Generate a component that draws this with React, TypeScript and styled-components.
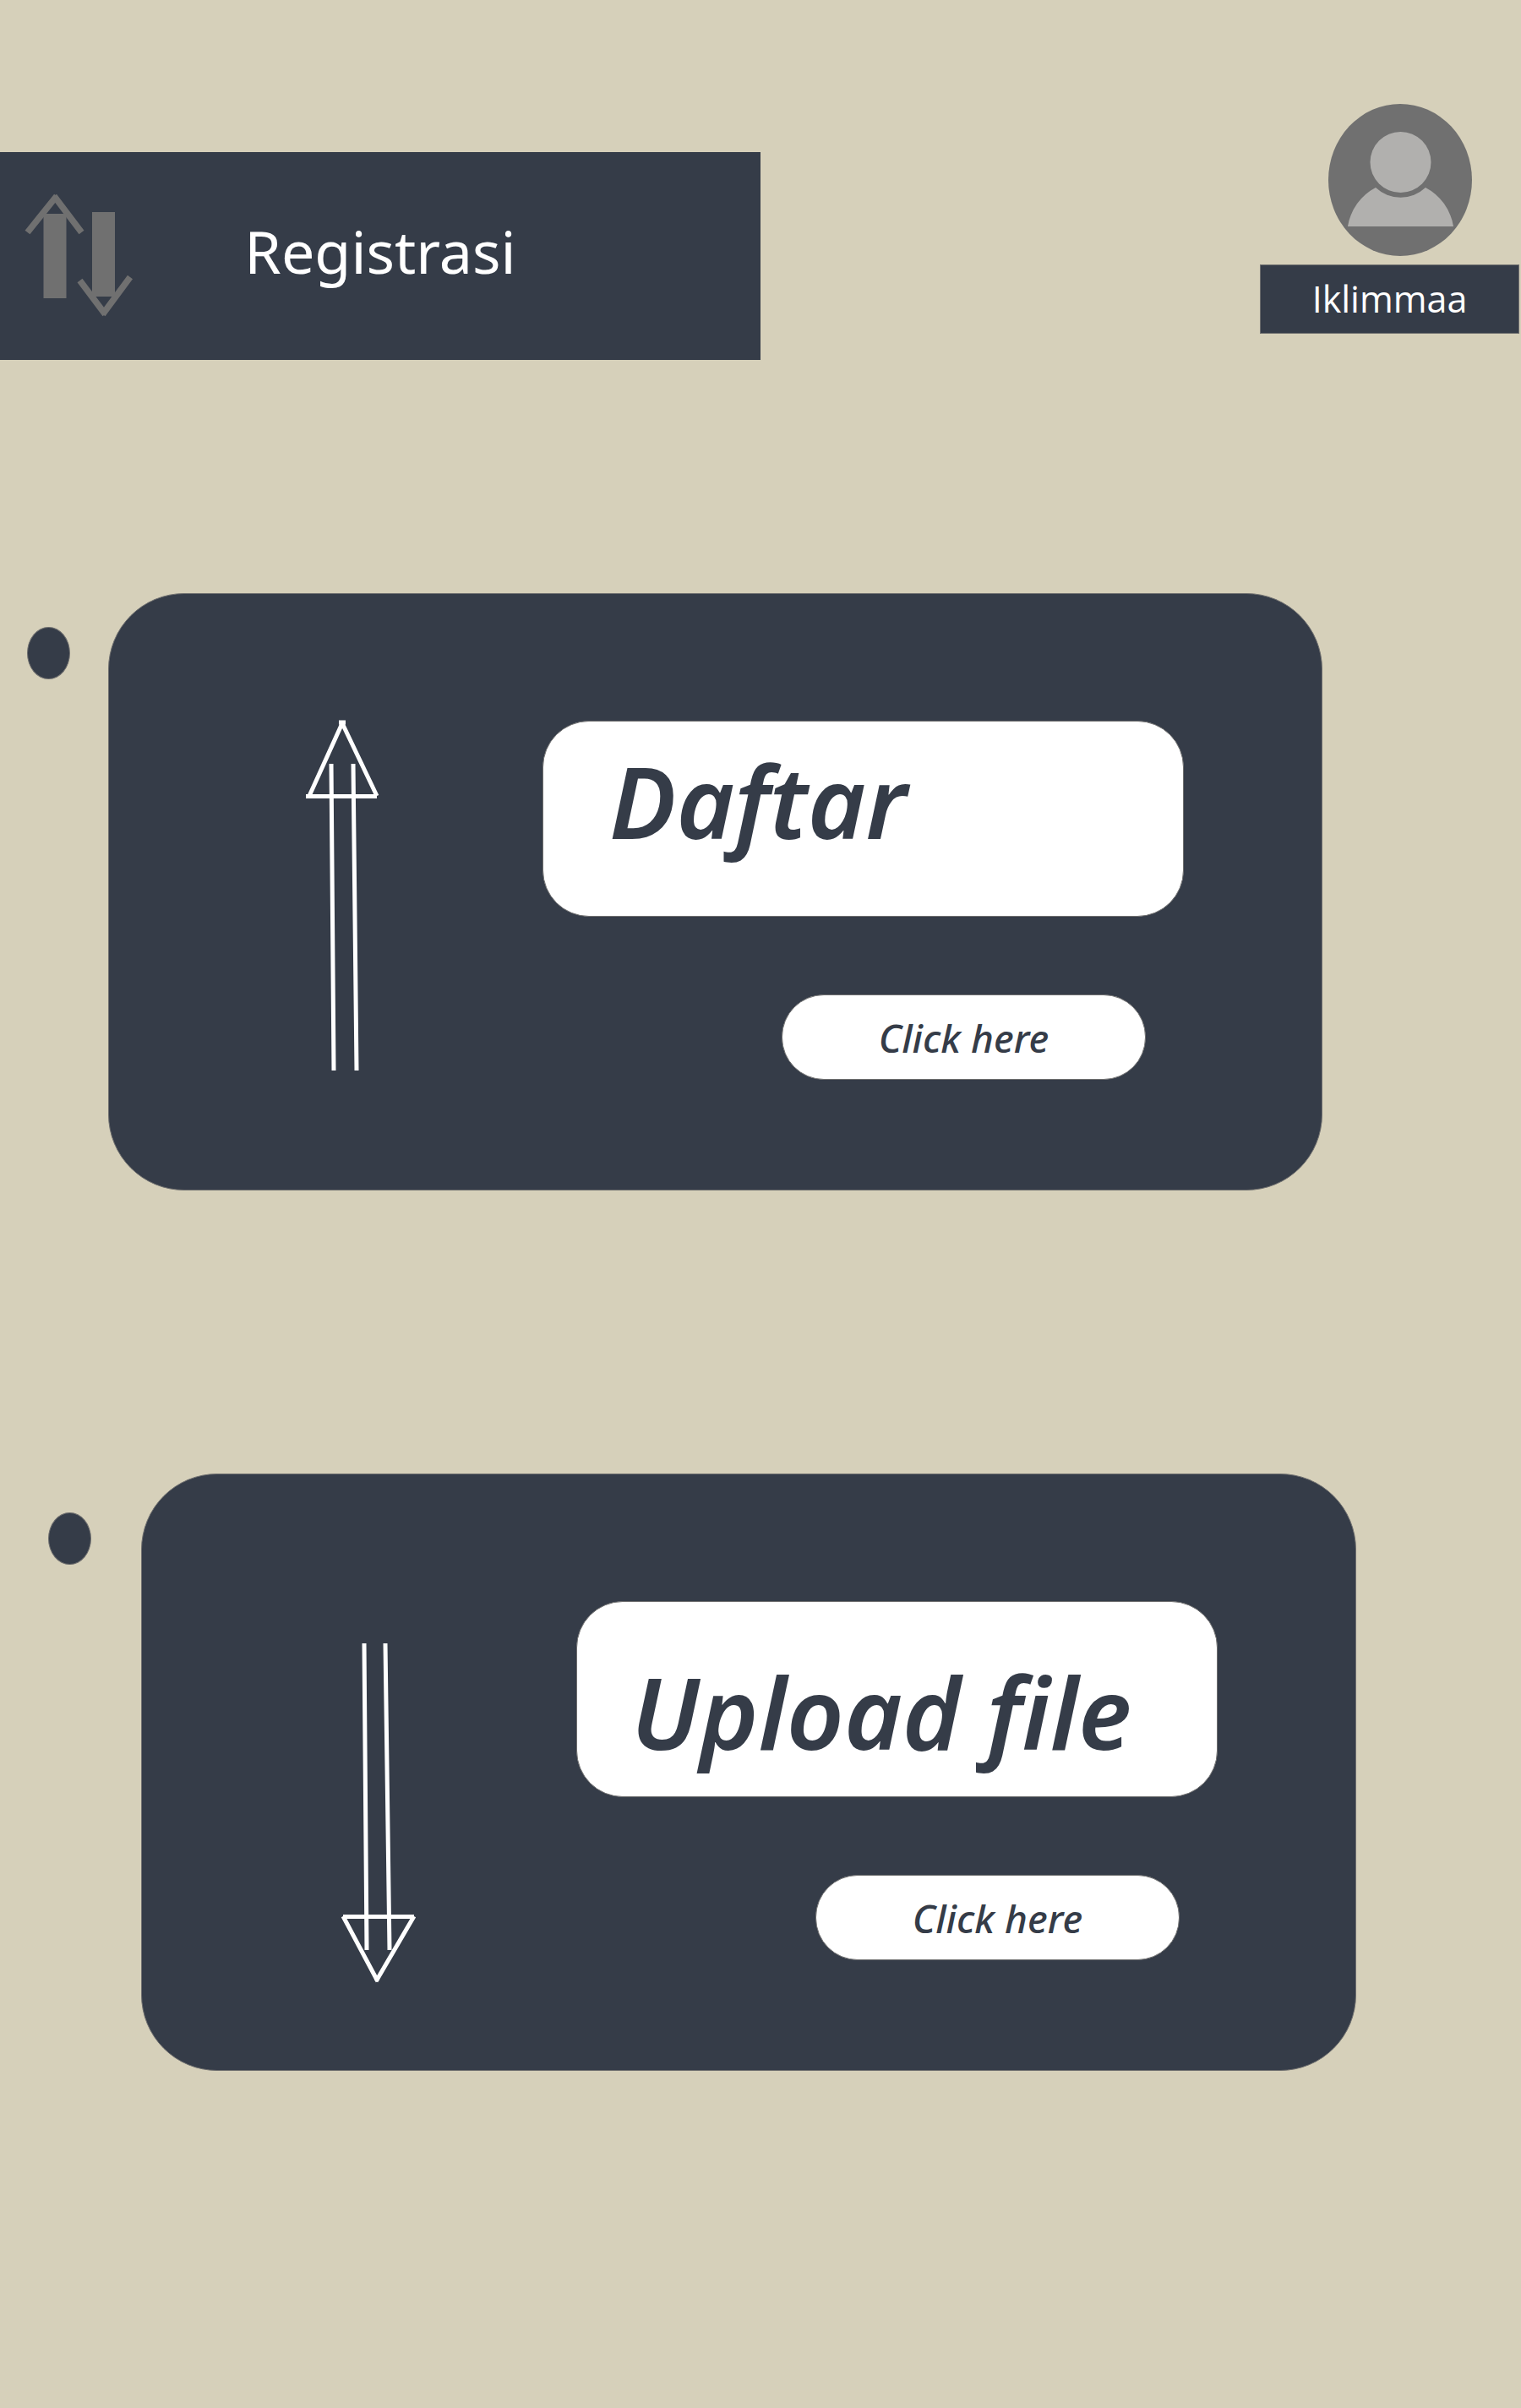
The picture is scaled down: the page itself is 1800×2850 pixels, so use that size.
import React from "react";
import styled, { createGlobalStyle } from "styled-components";

const color = {
  sand: "#d6d0ba",
  slate: "#353c48",
  grey: "#707070",
  silver: "#b1b0ae",
  white: "#ffffff",
};

const GlobalStyle = createGlobalStyle`
  *, *::before, *::after { box-sizing: border-box; }
  body {
    margin: 0;
    background: ${color.sand};
    font-family: "Segoe UI", "Noto Sans", "Open Sans", sans-serif;
  }
`;

const Page = styled.div`
  min-height: 100vh;
  padding: 123px 0 120px;
  background: ${color.sand};
`;

const Header = styled.header`
  display: flex;
  justify-content: space-between;
  align-items: flex-start;
`;

const Banner = styled.div`
  display: grid;
  grid-template-columns: 130px 1fr 130px;
  align-items: center;
  width: 50%;
  height: 246px;
  margin-top: 57px;
  padding: 0 28px;
  background: ${color.slate};
`;

const Logo = styled.svg`
  width: 130px;
  height: 150px;
`;

const Title = styled.h1`
  margin: 0;
  padding-bottom: 12px;
  color: ${color.white};
  font-size: 70px;
  font-weight: 400;
  line-height: 96px;
  text-align: center;
`;

const Profile = styled.div`
  display: flex;
  flex-direction: column;
  align-items: center;
  gap: 10px;
  width: 307px;
  margin-right: 2px;
`;

const Avatar = styled.svg`
  width: 170px;
  height: 180px;
  margin-left: 24px;
`;

const UserName = styled.div`
  width: 100%;
  border: 1px solid ${color.grey};
  background: ${color.slate};
  color: ${color.white};
  font-family: "Segoe UI", "Open Sans", "Noto Sans", sans-serif;
  font-size: 43px;
  line-height: 80px;
  text-align: center;
`;

const Options = styled.main`
  display: flex;
  flex-direction: column;
  gap: 335px;
  margin-top: 276px;
`;

const Option = styled.section<{ $left: number; $gap: number; $right: number }>`
  display: flex;
  align-items: flex-start;
  gap: ${(p) => p.$gap}px;
  padding: 0 ${(p) => p.$right}px 0 ${(p) => p.$left}px;
`;

const Bullet = styled.span<{ $top: number }>`
  flex: none;
  width: 51px;
  height: 62px;
  margin-top: ${(p) => p.$top}px;
  border: 1px solid ${color.grey};
  border-radius: 50%;
  background: ${color.slate};
`;

const Card = styled.div`
  display: flex;
  flex: 1;
  justify-content: space-between;
  align-items: flex-start;
  padding: 150px 163px 130px 233px;
  border: 1px solid ${color.grey};
  border-radius: 90px;
  background: ${color.slate};
`;

const Arrow = styled.svg`
  flex: none;
  width: 90px;
  height: 424px;
  overflow: visible;
  stroke: ${color.white};
  stroke-width: 5;
  fill: none;
`;

const CardBody = styled.div`
  display: flex;
  flex-direction: column;
  align-items: flex-end;
  gap: 92px;
`;

const Label = styled.h2<{ $top: number; $left: number }>`
  width: 759px;
  height: 232px;
  margin: 0;
  padding: ${(p) => p.$top}px 0 0 ${(p) => p.$left}px;
  border: 1px solid ${color.grey};
  border-radius: 55px;
  background: ${color.white};
  color: ${color.slate};
  font-size: 118px;
  font-style: italic;
  font-weight: 600;
  line-height: 160px;
  white-space: nowrap;
`;

const Action = styled.button`
  width: 431px;
  height: 101px;
  margin-right: 45px;
  padding: 0;
  border: 1px solid ${color.grey};
  border-radius: 50px;
  background: ${color.white};
  color: ${color.slate};
  font-family: inherit;
  font-size: 46px;
  font-style: italic;
  font-weight: 500;
  line-height: 60px;
  cursor: pointer;
`;

function LogoMark() {
  return (
    <Logo viewBox="28 228 130 150" aria-hidden="true" fill="none">
      <path d="M51.5 253h27v100h-27zM109 251h27v100h-27z" fill={color.grey} />
      <path
        d="M32.5 275 67 232M64 232 96.500 275M94.5 332 124.500 372M121.5 372 154 328"
        stroke={color.grey}
        strokeWidth="7.5"
      />
    </Logo>
  );
}

function UserAvatar() {
  return (
    <Avatar viewBox="0 0 170 180" role="img" aria-label="Iklimmaa">
      <ellipse cx="85" cy="90" rx="85" ry="90" fill={color.grey} />
      <circle cx="85.5" cy="69" r="36" fill={color.silver} />
      <path d="M23 145A63 63 0 0 1 56 99A43 43 0 0 0 115 99A63 63 0 0 1 148 145Z" fill={color.silver} />
    </Avatar>
  );
}

function UpArrow() {
  return (
    <Arrow viewBox="0 0 90 424" aria-hidden="true">
      <path d="M30 51 33 414M56 51 60 414M0 89.5H84M4 89 43 3M43 3 84 89M39 2H47" />
    </Arrow>
  );
}

function DownArrow() {
  return (
    <Arrow viewBox="0 0 90 424" aria-hidden="true">
      <path d="M30 50 33 413M55 50 60 413M5 373.5H89M5 373 46 450M44 450 89 373" />
    </Arrow>
  );
}

export default function App() {
  return (
    <Page>
      <GlobalStyle />
      <Header>
        <Banner>
          <LogoMark />
          <Title>Registrasi</Title>
        </Banner>
        <Profile>
          <UserAvatar />
          <UserName>Iklimmaa</UserName>
        </Profile>
      </Header>
      <Options>
        <Option $left={32} $gap={45} $right={235}>
          <Bullet $top={40} />
          <Card>
            <UpArrow />
            <CardBody>
              <Label $top={14} $left={78}>Daftar</Label>
              <Action type="button">Click here</Action>
            </CardBody>
          </Card>
        </Option>
        <Option $left={57} $gap={59} $right={195}>
          <Bullet $top={46} />
          <Card>
            <DownArrow />
            <CardBody>
              <Label $top={50} $left={64}>Upload file</Label>
              <Action type="button">Click here</Action>
            </CardBody>
          </Card>
        </Option>
      </Options>
    </Page>
  );
}
